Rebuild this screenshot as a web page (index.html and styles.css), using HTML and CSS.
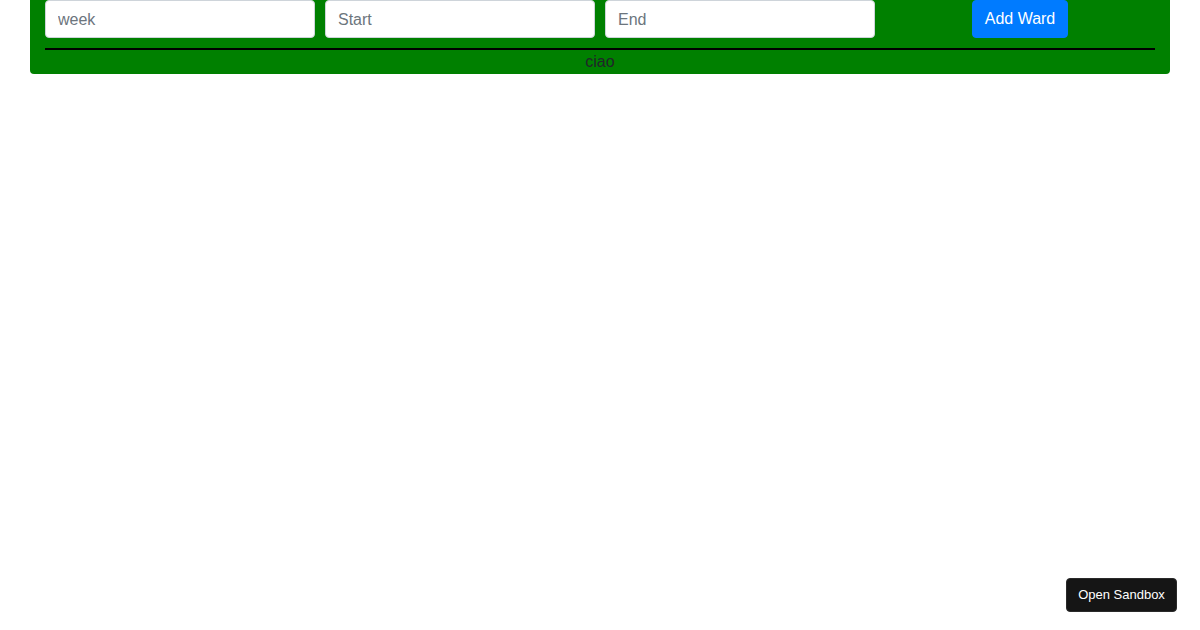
FILE: index.html
```html
<!DOCTYPE html>
<html>
<head>
<meta charset="utf-8">
<link rel="stylesheet" href="styles.css">
</head>
<body>
<div class="container">
  <div class="row">
    <input class="field" type="text" placeholder="week">
    <input class="field" type="text" placeholder="Start">
    <input class="field" type="text" placeholder="End">
    <div class="btn-cell"><button class="btn">Add Ward</button></div>
  </div>
  <hr class="rule">
  <div class="label">ciao</div>
</div>
<button class="sandbox">Open Sandbox</button>
</body>
</html>
```
FILE: styles.css
```css
html, body {
  margin: 0;
  padding: 0;
  background: #fff;
  font-family: "Liberation Sans", Arial, sans-serif;
  font-size: 16px;
  line-height: 1.5;
  color: #212529;
}
.container {
  width: 1110px;
  margin: 0 auto;
  padding: 0 15px;
  background: #008000;
  border-radius: 0 0 4px 4px;
}
.row {
  display: flex;
  gap: 10px;
}
.field {
  width: 270px;
  height: 38px;
  box-sizing: border-box;
  border: 1px solid #ced4da;
  border-radius: 4px;
  padding: 7px 12px 5px 12px;
  font-family: inherit;
  font-size: 16px;
  line-height: 1.5;
  color: #495057;
  background: #fff;
  margin: 0;
}
.field::placeholder {
  color: #6c757d;
  opacity: 1;
}
.btn-cell {
  width: 270px;
  display: flex;
  justify-content: center;
}
.btn {
  height: 38px;
  padding: 6px 12px;
  border: 1px solid #007bff;
  border-radius: 4px;
  background: #007bff;
  color: #fff;
  font-family: inherit;
  font-size: 16px;
  line-height: 1.5;
  margin: 0;
}
.rule {
  margin: 10px 0 0 0;
  border: 0;
  border-top: 2px solid #000;
  height: 0;
}
.label {
  text-align: center;
  line-height: 24px;
}
.sandbox {
  position: fixed;
  right: 23px;
  bottom: 18px;
  height: 34px;
  width: 111px;
  padding: 0 0 2px 0;
  border: 1px solid #2a2a2a;
  border-radius: 4px;
  background: #151515;
  color: #fff;
  font-family: "Liberation Sans", Arial, sans-serif;
  font-size: 13px;
}
```
